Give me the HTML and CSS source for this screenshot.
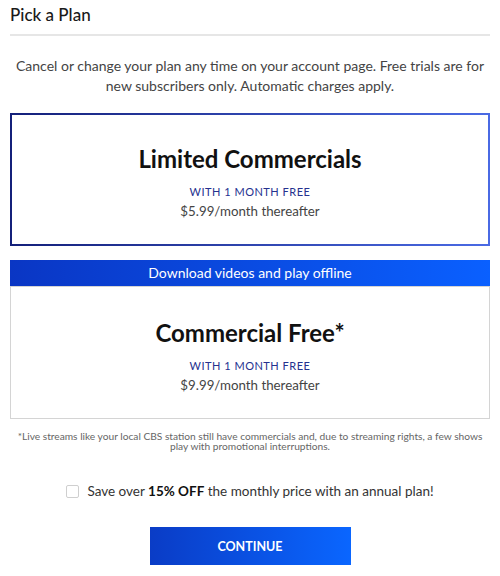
FILE: index.html
```html
<!DOCTYPE html>
<html lang="en">
<head>
  <meta charset="UTF-8">
  <meta name="viewport" content="width=device-width, initial-scale=1.0">
  <title>Pick a Plan</title>
  <link rel="stylesheet" href="styles.css">
</head>
<body>
  <!-- Header -->
  <div class="page-header">
    <h1>Pick a Plan</h1>
  </div>

  <p class="intro">Cancel or change your plan any time on your account page. Free trials are for new subscribers only. Automatic charges apply.</p>

  <!-- Plans -->
  <div class="plan selected">
    <h2>Limited Commercials</h2>
    <p class="trial">WITH 1 MONTH FREE</p>
    <p class="price">$5.99/month thereafter</p>
  </div>

  <div class="plan-group">
    <div class="plan-banner">Download videos and play offline</div>
    <div class="plan">
      <h2>Commercial Free*</h2>
      <p class="trial">WITH 1 MONTH FREE</p>
      <p class="price">$9.99/month thereafter</p>
    </div>
  </div>

  <p class="footnote">*Live streams like your local CBS station still have commercials and, due to streaming rights, a few shows play with promotional interruptions.</p>

  <label class="annual">
    <input type="checkbox">
    <span>Save over <strong>15% OFF</strong> the monthly price with an annual plan!</span>
  </label>

  <div class="actions">
    <button class="continue">CONTINUE</button>
  </div>
</body>
</html>
```

FILE: styles.css
```css
/* General Layout */
body {
  margin: 0;
  padding: 0 10px;
  font-family: Lato, "Open Sans", sans-serif;
  background-color: #ffffff;
  color: #333333;
}

.page-header {
  border-bottom: 2px solid #e6e6e6;
  padding: 5px 0 9px;
}

.page-header h1 {
  margin: 0;
  font-size: 17px;
  font-weight: 500;
  color: #1a1a1a;
  line-height: 20px;
}

.intro {
  margin: 20px 0 0;
  padding: 0 4px;
  font-size: 14px;
  line-height: 20px;
  text-align: center;
  color: #444444;
}

/* Plan Cards */
.plan {
  text-align: center;
  border: 1px solid #d4d4d4;
  height: 133px;
  box-sizing: border-box;
  padding-top: 33px;
}

.plan.selected {
  margin-top: 17px;
  height: 133px;
  border: 2px solid;
  border-image: linear-gradient(to right, #14207a, #4a6ae4) 1;
  padding-top: 31px;
}

.plan h2 {
  margin: 0;
  font-size: 24px;
  font-weight: 700;
  color: #111111;
  line-height: 26px;
}

.plan .trial {
  margin: 13px 0 0;
  font-size: 11px;
  letter-spacing: 0.5px;
  color: #25318f;
  line-height: 14px;
}

.plan .price {
  margin: 4px 0 0;
  font-size: 13.3px;
  color: #444444;
  line-height: 17px;
}

.plan-group {
  margin-top: 14px;
}

.plan-banner {
  height: 26px;
  line-height: 26px;
  text-align: center;
  font-size: 14px;
  color: #ffffff;
  background: linear-gradient(to right, #0a36c4, #0a60ff);
}

.footnote {
  margin: 12px 0 0;
  padding: 0 4px;
  font-size: 10.2px;
  line-height: 10px;
  text-align: center;
  color: #666666;
}

/* Annual option */
.annual {
  display: flex;
  align-items: center;
  justify-content: center;
  gap: 8px;
  margin-top: 32px;
  font-size: 13.5px;
  color: #333333;
}

.annual input {
  margin: 0;
  width: 13px;
  height: 13px;
  appearance: none;
  border: 1px solid #cfcfcf;
  border-radius: 2px;
  background: #ffffff;
}

.annual strong {
  color: #111111;
}

.actions {
  display: flex;
  justify-content: center;
  margin-top: 28px;
}

button.continue {
  width: 201px;
  height: 38px;
  border: none;
  color: #ffffff;
  font-family: inherit;
  font-size: 12.5px;
  font-weight: 700;
  background: linear-gradient(to right, #0a3cc6, #0a66ff);
  cursor: pointer;
}
```
